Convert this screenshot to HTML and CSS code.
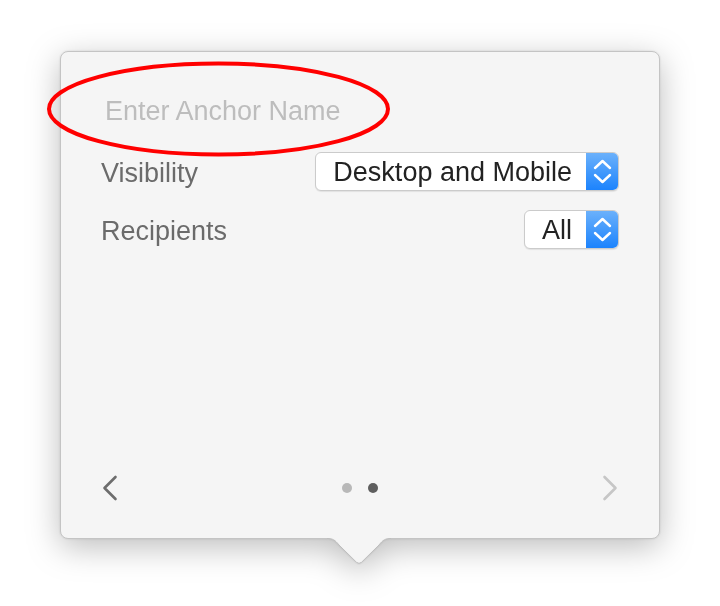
FILE: index.html
```html
<!DOCTYPE html>
<html lang="en">
<head>
  <meta charset="UTF-8" />
  <meta name="viewport" content="width=device-width, initial-scale=1.0"/>
  <title>Anchor Popover</title>
  <link rel="stylesheet" href="styles.css">
</head>
<body>

  <div class="stage">
    <div class="popover">
      <input class="anchor-name" type="text" placeholder="Enter Anchor Name">

      <div class="row">
        <span class="label">Visibility</span>
        <div class="popup-btn">
          <span class="popup-value">Desktop and Mobile</span>
          <span class="stepper">
            <svg width="33" height="39" viewBox="0 0 33 39">
              <path d="M9 16 L16.5 9 L24 16 M9 23 L16.5 30 L24 23" />
            </svg>
          </span>
        </div>
      </div>

      <div class="row">
        <span class="label">Recipients</span>
        <div class="popup-btn">
          <span class="popup-value">All</span>
          <span class="stepper">
            <svg width="33" height="39" viewBox="0 0 33 39">
              <path d="M9 16 L16.5 9 L24 16 M9 23 L16.5 30 L24 23" />
            </svg>
          </span>
        </div>
      </div>

      <div class="pager">
        <svg class="nav nav-prev" width="18" height="26" viewBox="0 0 18 26">
          <path d="M14.5 2 L3.5 13 L14.5 24" />
        </svg>
        <div class="dots">
          <span class="dot"></span>
          <span class="dot active"></span>
        </div>
        <svg class="nav nav-next" width="18" height="26" viewBox="0 0 18 26">
          <path d="M3.5 2 L14.5 13 L3.5 24" />
        </svg>
      </div>

      <!-- little pointer under the popover -->
      <svg class="pointer" width="64" height="27" viewBox="0 0 64 27">
        <path class="pointer-fill" d="M0 -1 L0 0.5 C6 0.5 8 2 12 7 L29.5 24.3 Q32 26.5 34.5 24.3 L52 7 C56 2 58 0.5 64 0.5 L64 -1 Z" />
        <path class="pointer-line" d="M0 0.5 C6 0.5 8 2 12 7 L29.5 24.3 Q32 26.5 34.5 24.3 L52 7 C56 2 58 0.5 64 0.5" />
      </svg>
    </div>

    <!-- red annotation ring -->
    <svg class="annotation" width="720" height="606" viewBox="0 0 720 606">
      <ellipse cx="218.5" cy="109" rx="169.5" ry="45.5" />
    </svg>
  </div>

</body>
</html>
```

FILE: styles.css
```css
body {
  margin: 0;
  padding: 0;
  background: #ffffff;
  font-family: "Liberation Sans", Arial, sans-serif;
}

.stage {
  position: relative;
  width: 720px;
  height: 606px;
  padding: 51px 0 0 60px;
  box-sizing: border-box;
}

.popover {
  position: relative;
  width: 600px;
  height: 488px;
  box-sizing: border-box;
  background: #f5f5f5;
  border: 1px solid #c4c4c4;
  border-radius: 8px;
  padding: 39px 40px 35px 40px;
  display: flex;
  flex-direction: column;
  filter: drop-shadow(0 0 1px rgba(0, 0, 0, 0.12)) drop-shadow(0 8px 16px rgba(0, 0, 0, 0.26));
}

.anchor-name {
  height: 40px;
  margin: 0 0 21px 0;
  padding: 0 0 0 4px;
  border: none;
  outline: none;
  background: transparent;
  font-family: inherit;
  font-size: 27px;
  color: #333;
}

.anchor-name::placeholder {
  color: #bdbdbd;
}

.row {
  display: flex;
  align-items: center;
  justify-content: space-between;
  height: 39px;
  margin-bottom: 19px;
}

.label {
  padding-top: 3px;
  font-size: 27px;
  color: #6b6b6b;
}

.popup-btn {
  display: flex;
  align-items: stretch;
  height: 39px;
  box-sizing: border-box;
  background: #fff;
  border: 1px solid #cbcbcb;
  border-radius: 6px;
  box-shadow: 0 1px 1px rgba(0, 0, 0, 0.08);
  overflow: hidden;
}

.popup-value {
  display: flex;
  align-items: center;
  padding: 2px 14px 0 17px;
  font-size: 27px;
  color: #222;
}

.stepper {
  display: block;
  width: 33px;
  margin: -1px -1px -1px 0;
  background: linear-gradient(to bottom, #6db2fb, #1a82fd);
}

.stepper svg {
  display: block;
}

.stepper path {
  fill: none;
  stroke: #fff;
  stroke-width: 2.4;
  stroke-linecap: round;
  stroke-linejoin: round;
}

.pager {
  margin-top: auto;
  height: 30px;
  display: flex;
  align-items: center;
  justify-content: space-between;
}

.nav path {
  fill: none;
  stroke-width: 2.6;
  stroke-linecap: round;
  stroke-linejoin: round;
}

.nav-prev path {
  stroke: #6d6d6d;
}

.nav-next path {
  stroke: #c6c6c6;
}

.dots {
  display: flex;
  gap: 16px;
}

.dot {
  width: 10px;
  height: 10px;
  border-radius: 50%;
  background: #b8b8b8;
}

.dot.active {
  background: #5e5e5e;
}

.pointer {
  position: absolute;
  left: 266px;
  top: 100%;
  overflow: visible;
}

.pointer-fill {
  fill: #f5f5f5;
}

.pointer-line {
  fill: none;
  stroke: #bdbdbd;
  stroke-width: 1;
}

.annotation {
  position: absolute;
  left: 0;
  top: 0;
  pointer-events: none;
}

.annotation ellipse {
  fill: none;
  stroke: #ff0000;
  stroke-width: 4;
}
```
